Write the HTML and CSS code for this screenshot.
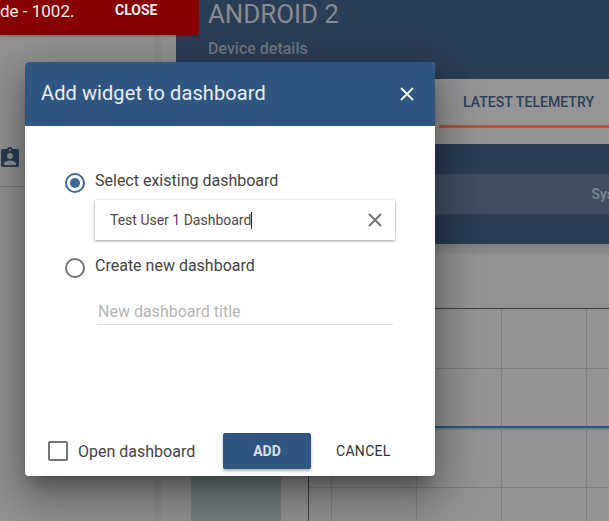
FILE: index.html
```html
<!DOCTYPE html>
<html lang="en">
<head>
<meta charset="utf-8">
<title>Add widget to dashboard</title>
<link rel="stylesheet" href="styles.css">
</head>
<body>
<div class="page">
  <aside class="side">
    <div class="side-main">
      <div class="side-top">
        <svg class="ind-icon" viewBox="0 0 24 24" width="24" height="24"><path d="M19 3h-4.18C14.4 1.84 13.3 1 12 1c-1.3 0-2.4.84-2.82 2H5c-1.1 0-2 .9-2 2v14c0 1.1.9 2 2 2h14c1.1 0 2-.9 2-2V5c0-1.1-.9-2-2-2zm-7 0c.55 0 1 .45 1 1s-.45 1-1 1-1-.45-1-1 .45-1 1-1zm0 4c1.66 0 3 1.34 3 3s-1.34 3-3 3-3-1.34-3-3 1.34-3 3-3zm6 12H6v-1.4c0-2 4-3.1 6-3.1s6 1.1 6 3.1V19z"/></svg>
      </div>
    </div>
    <div class="side-stripe"></div>
    <div class="side-end"></div>
  </aside>
  <main class="main">
    <header class="device-head">
      <div class="device-title">ANDROID 2</div>
      <div class="device-sub">Device details</div>
    </header>
    <nav class="tabs">
      <div class="tab">LATEST TELEMETRY</div>
    </nav>
    <div class="band band-top"></div>
    <div class="band-mid"><span class="sys">Sys</span></div>
    <div class="band band-low"></div>
    <div class="fade"></div>
    <div class="lower">
      <div class="gutter"></div>
      <div class="legend"></div>
      <div class="chart-gap"></div>
      <svg class="chart" viewBox="0 0 301 267" preserveAspectRatio="xMinYMin">
        <g class="grid">
          <path d="M23.5 54V267M108.5 54V267M193.5 54V267M278.5 54V267"/>
          <path d="M0 114.5H301M0 233.5H301"/>
        </g>
        <path class="axis" d="M0.5 54V267M0 54.5H301"/>
        <path class="series-shadow" d="M0 175H301"/>
        <path class="series" d="M0 173H301"/>
      </svg>
    </div>
  </main>
</div>

<div class="snack">
  <span class="snack-text">de - 1002.</span>
  <span class="snack-action">CLOSE</span>
</div>

<section class="dialog">
  <header class="dialog-head">
    <h2 class="dialog-title">Add widget to dashboard</h2>
    <svg class="dialog-close" viewBox="0 0 14 14" width="14" height="14"><path d="M1 1L13 13M13 1L1 13"/></svg>
  </header>
  <div class="dialog-body">
    <div class="radio-row">
      <span class="radio radio-on"><span class="radio-dot"></span></span>
      <span class="radio-label">Select existing dashboard</span>
    </div>
    <div class="combo">
      <span class="combo-text">Test User 1 Dashboard</span><span class="caret"></span>
      <svg class="combo-clear" viewBox="0 0 14 14" width="14" height="14"><path d="M1 1L13 13M13 1L1 13"/></svg>
    </div>
    <div class="radio-row radio-row-second">
      <span class="radio"></span>
      <span class="radio-label">Create new dashboard</span>
    </div>
    <div class="title-field">New dashboard title</div>
  </div>
  <footer class="dialog-foot">
    <span class="check"></span>
    <span class="check-label">Open dashboard</span>
    <span class="btn-add">ADD</span>
    <span class="btn-cancel">CANCEL</span>
  </footer>
</section>
</body>
</html>
```

FILE: styles.css
```css
* { box-sizing: border-box; }
html, body { margin: 0; padding: 0; height: 100%; overflow: hidden; }
body { font-family: Roboto, "Noto Sans", sans-serif; background: #939393; }

.page { display: flex; width: 609px; height: 521px; overflow: hidden; }

/* left navigation */
.side { width: 176px; flex: none; display: flex; }
.side-main { width: 154px; flex: none; }
.side-top { height: 187px; border-bottom: 1px solid #7b7b7b; padding-top: 146px; }
.ind-icon { display: block; margin-left: -2px; fill: #2a3e55; }
.side-stripe { width: 7px; flex: none; background: #8d8d8d; }
.side-end { flex: 1; }

/* device panel */
.main { flex: 1; min-width: 0; display: flex; flex-direction: column; }
.device-head { height: 79px; background: #2a3e55; padding: 0 0 0 32px; }
.device-title { font-size: 26px; line-height: 28px; color: #868c93; white-space: nowrap; letter-spacing: -.1px; }
.device-sub { font-size: 16px; line-height: 20px; font-weight: 500; color: #6f7a87; margin-top: 11px; }

.tabs { height: 49px; display: flex; justify-content: flex-end; background: #959595; }
.tab {
  width: 170px; height: 49px; border-bottom: 3px solid #b0533a;
  font-size: 14px; font-weight: 500; line-height: 46px; color: #2c4058;
  padding-left: 24px; white-space: nowrap; letter-spacing: .06px;
}
.band { height: 30px; background: #2a3d53; }
.band-top { margin-top: 16px; }
.band-mid { height: 40px; background: #3f4f60; display: flex; justify-content: flex-end; align-items: center; overflow: hidden; }
.sys { font-size: 14px; font-weight: 500; color: #7f8992; margin-right: -5px; }
.fade { height: 10px; background: linear-gradient(#7d8082, #8c8d8e); }

.lower { flex: 1; display: flex; min-height: 0; }
.gutter { width: 15px; flex: none; }
.legend { width: 90px; flex: none; background: #757f81; }
.chart-gap { width: 27px; flex: none; }
.chart { width: 301px; height: 267px; flex: none; display: block; }
.grid path { fill: none; stroke: #7f7f7f; stroke-width: 1; }
.axis { fill: none; stroke: #3f3f3f; stroke-width: 1; }
.series { fill: none; stroke: #1f5a8a; stroke-width: 2; }
.series-shadow { fill: none; stroke: #808080; stroke-width: 2; }

/* snackbar */
.snack {
  position: absolute; left: 0; top: 0; width: 199px; height: 35px;
  background: #870000; border-bottom-right-radius: 2px;
  color: #fff; white-space: nowrap; box-shadow: 0 1px 3px rgba(0, 0, 0, .25);
}
.snack-text { position: absolute; left: 0; top: 0; font-size: 17px; line-height: 22px; color: #ececec; }
.snack-action { position: absolute; left: 115px; top: 0; font-size: 14px; font-weight: 700; line-height: 20px; color: #ececec; }

/* dialog */
.dialog {
  position: absolute; left: 25px; top: 62px; width: 410px; height: 414px;
  background: #fff; border-radius: 4px; display: flex; flex-direction: column;
  box-shadow: 0 11px 15px -7px rgba(0,0,0,.3), 0 24px 38px 3px rgba(0,0,0,.2), 0 9px 46px 8px rgba(0,0,0,.2);
  color: #444;
}
.dialog-head {
  height: 64px; flex: none; background: #2f5680; border-radius: 4px 4px 0 0;
  display: flex; align-items: center; justify-content: space-between;
  padding: 0 21px 0 16px; color: #e8edf2;
}
.dialog-title { margin: 0 0 2px; font-size: 20px; font-weight: 400; line-height: 28px; letter-spacing: .09px; }
.dialog-close { fill: none; stroke: #f0f3f6; stroke-width: 2; }

.dialog-body { flex: 1; padding: 43px 40px 0 40px; }
.radio-row { display: flex; align-items: center; height: 24px; }
.radio-row-second { margin-top: 14px; }
.radio {
  width: 20px; height: 20px; flex: none; border: 2px solid #757575; border-radius: 50%;
  display: flex; align-items: center; justify-content: center; margin-top: 4px;
}
.radio-on { border-color: #3f6a97; }
.radio-dot { width: 10px; height: 10px; border-radius: 50%; background: #3f6a97; }
.radio-label { margin-left: 10px; font-size: 16px; line-height: 20px; }

.combo {
  width: 300px; height: 40px; margin: 7px 0 0 30px; background: #fff;
  box-shadow: 0 1px 3px rgba(0,0,0,.4);
  display: flex; align-items: center; padding-left: 15px; font-size: 14px; color: #4a4a4a;
}
.caret { width: 1px; height: 17px; background: #222; }
.combo-clear { margin-left: auto; margin-right: 13px; fill: none; stroke: #757575; stroke-width: 2; }

.title-field {
  width: 296px; height: 28px; margin: 19px 0 0 32px; padding: 5px 0 0 1px;
  border-bottom: 1px solid #e0e0e0; font-size: 16px; line-height: 20px; color: #b5b5b5;
}

.dialog-foot { height: 61px; flex: none; display: flex; align-items: flex-start; padding-left: 23px; }
.check { width: 20px; height: 20px; flex: none; border: 2px solid #757575; border-radius: 2px; margin-top: 26px; }
.check-label { margin: 26px 0 0 10px; width: 145px; font-size: 16px; line-height: 21px; }
.btn-add {
  width: 88px; height: 36px; margin-top: 18px; background: #2f5680; border-radius: 2px;
  box-shadow: 0 2px 3px rgba(0,0,0,.3);
  font-size: 14px; font-weight: 700; line-height: 36px; text-align: center; color: #d9e0e8;
}
.btn-cancel { margin: 18px 0 0 25px; font-size: 14px; font-weight: 400; letter-spacing: .3px; line-height: 36px; color: #333; }
```
